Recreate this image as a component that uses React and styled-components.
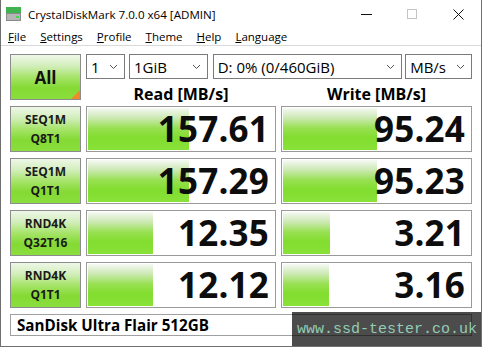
import React from 'react';
import styled, { createGlobalStyle } from 'styled-components';

const GlobalStyle = createGlobalStyle`
  html, body {
    margin: 0;
    padding: 0;
    background: #ffffff;
  }
  * {
    box-sizing: border-box;
  }
`;

const UI_FONT = `"Open Sans", "Noto Sans", "DejaVu Sans", sans-serif`;

const Window = styled.div`
  position: relative;
  width: 482px;
  height: 347px;
  overflow: hidden;
  background: #ffffff;
  border: 1px solid #707070;
  border-top: none;
  font-family: ${UI_FONT};
  color: #000;
`;

const TitleBar = styled.div`
  display: flex;
  align-items: center;
  height: 28px;
  padding-left: 5px;
`;

const TitleText = styled.span`
  margin-left: 7px;
  font-size: 11.6px;
  flex: 1;
`;

const WinButton = styled.div`
  width: 46px;
  height: 28px;
  display: flex;
  align-items: center;
  justify-content: center;
`;

const MenuBar = styled.div`
  display: flex;
  align-items: center;
  height: 18px;
  padding-left: 7px;
  gap: 14px;
  font-size: 11.5px;
  border-bottom: 1px solid #d9d9d9;
`;

const MenuItem = styled.span`
  &::first-letter {
    text-decoration: underline;
  }
`;

const Main = styled.div`
  display: grid;
  grid-template-columns: 71px 190px 191px;
  column-gap: 5px;
  row-gap: 6px;
  padding: 8px 0 0 9px;
`;

const greenFace = `linear-gradient(#eef7e8 0%, #d2eebb 25%, #a6e46a 50%, #84da33 75%, #8ade3d 100%)`;

const AllButton = styled.div`
  position: relative;
  height: 46px;
  border: 1px solid #8c8c8c;
  background: ${greenFace};
  display: flex;
  align-items: center;
  justify-content: center;
  font-size: 17px;
  font-weight: 700;
  color: #111;

  &::after {
    content: '';
    position: absolute;
    right: 0;
    bottom: 0;
    border-style: solid;
    border-width: 0 0 9px 9px;
    border-color: transparent transparent #ef8a2c transparent;
  }
`;

const TopPanel = styled.div`
  grid-column: 2 / 4;
  display: flex;
  flex-direction: column;
`;

const Controls = styled.div`
  display: flex;
  height: 25px;
`;

const Select = styled.div`
  width: ${props => props.width}px;
  margin-right: ${props => props.gap || 0}px;
  height: 25px;
  border: 1px solid #7a7a7a;
  display: flex;
  align-items: center;
  padding: 0 6px 0 4px;
  font-size: 15px;
  white-space: nowrap;

  span {
    flex: 1;
  }
`;

const Headers = styled.div`
  display: grid;
  grid-template-columns: 190px 191px;
  column-gap: 5px;
  height: 21px;
  align-items: center;
`;

const Header = styled.div`
  text-align: center;
  font-size: 16px;
  font-weight: 700;
  padding-top: 4px;
`;

const TestLabel = styled.div`
  height: 46px;
  border: 1px solid #8c8c8c;
  background: ${greenFace};
  display: flex;
  flex-direction: column;
  align-items: center;
  justify-content: center;
  font-size: 12px;
  font-weight: 700;
  line-height: 19px;
  color: #1a1a1a;
`;

const ResultBox = styled.div`
  position: relative;
  height: 46px;
  border: 1px solid #9a9a9a;
  padding: 1px;
  display: flex;
  align-items: center;
`;

const Bar = styled.div`
  position: absolute;
  left: 1px;
  top: 1px;
  bottom: 1px;
  background: linear-gradient(#f6f9f4 0%, #cfeab8 22%, #98e052 48%, #82dd2f 70%, #88e238 100%);
`;

const Value = styled.div`
  position: relative;
  width: 100%;
  text-align: right;
  padding-right: 5px;
  font-size: 35px;
  font-weight: 700;
  line-height: 44px;
  letter-spacing: 0.2px;
  color: #0d0d0d;
`;

const NameBox = styled.div`
  grid-column: 1 / 4;
  height: 22px;
  border: 1px solid #a0a0a0;
  display: flex;
  align-items: center;
  padding-left: 6px;
  font-size: 15.2px;
  font-weight: 700;
`;

const Watermark = styled.div`
  position: absolute;
  left: 291px;
  top: 312px;
  right: 0;
  bottom: 0;
  background: rgba(0, 0, 0, 0.7);
  display: flex;
  align-items: center;
  padding-left: 5px;
  font-family: "Liberation Mono", "DejaVu Sans Mono", monospace;
  font-size: 15px;
  color: #93ccb4;
`;

const Chevron = () => (
  <svg width="9" height="6" viewBox="0 0 9 6">
    <path d="M1 1 L4.5 4.5 L8 1" fill="none" stroke="#555" strokeWidth="1" />
  </svg>
);

const AppIcon = () => (
  <svg width="15" height="14" viewBox="0 0 15 14">
    <rect x="0" y="0" width="15" height="6" fill="#3fb34f" />
    <rect x="0" y="6" width="15" height="8" fill="#8a8a8a" />
    <rect x="1" y="7" width="13" height="6" fill="#b5b5b5" />
    <rect x="10" y="9" width="3" height="2" fill="#49d35a" />
  </svg>
);

const rows = [
  { a: 'SEQ1M', b: 'Q8T1', read: '157.61', write: '95.24', rw: 101, ww: 94 },
  { a: 'SEQ1M', b: 'Q1T1', read: '157.29', write: '95.23', rw: 101, ww: 94 },
  { a: 'RND4K', b: 'Q32T16', read: '12.35', write: '3.21', rw: 65, ww: 47 },
  { a: 'RND4K', b: 'Q1T1', read: '12.12', write: '3.16', rw: 65, ww: 46 }
];

const menus = ['File', 'Settings', 'Profile', 'Theme', 'Help', 'Language'];

const App = () => (
  <>
    <GlobalStyle />
    <Window>
      <TitleBar>
        <AppIcon />
        <TitleText>CrystalDiskMark 7.0.0 x64 [ADMIN]</TitleText>
        <WinButton>
          <svg width="11" height="11" viewBox="0 0 11 11">
            <line x1="0" y1="5.5" x2="11" y2="5.5" stroke="#111" strokeWidth="1" />
          </svg>
        </WinButton>
        <WinButton>
          <svg width="10" height="10" viewBox="0 0 10 10">
            <rect x="0.5" y="0.5" width="9" height="9" fill="none" stroke="#c4c4c4" strokeWidth="1" />
          </svg>
        </WinButton>
        <WinButton>
          <svg width="11" height="11" viewBox="0 0 11 11">
            <path d="M0.5 0.5 L10.5 10.5 M10.5 0.5 L0.5 10.5" stroke="#111" strokeWidth="1" />
          </svg>
        </WinButton>
      </TitleBar>
      <MenuBar>
        {menus.map(m => (
          <MenuItem key={m}>{m}</MenuItem>
        ))}
      </MenuBar>
      <Main>
        <AllButton>All</AllButton>
        <TopPanel>
          <Controls>
            <Select width={39} gap={4}>
              <span>1</span>
              <Chevron />
            </Select>
            <Select width={79} gap={5}>
              <span>1GiB</span>
              <Chevron />
            </Select>
            <Select width={190} gap={3}>
              <span>D: 0% (0/460GiB)</span>
              <Chevron />
            </Select>
            <Select width={67}>
              <span>MB/s</span>
              <Chevron />
            </Select>
          </Controls>
          <Headers>
            <Header>Read [MB/s]</Header>
            <Header>Write [MB/s]</Header>
          </Headers>
        </TopPanel>
        {rows.map((r, i) => (
          <React.Fragment key={i}>
            <TestLabel>
              <div>{r.a}</div>
              <div>{r.b}</div>
            </TestLabel>
            <ResultBox>
              <Bar style={{ width: r.rw }} />
              <Value>{r.read}</Value>
            </ResultBox>
            <ResultBox>
              <Bar style={{ width: r.ww }} />
              <Value>{r.write}</Value>
            </ResultBox>
          </React.Fragment>
        ))}
        <NameBox>SanDisk Ultra Flair 512GB</NameBox>
      </Main>
      <Watermark>www.ssd-tester.co.uk</Watermark>
    </Window>
  </>
);

export default App;
